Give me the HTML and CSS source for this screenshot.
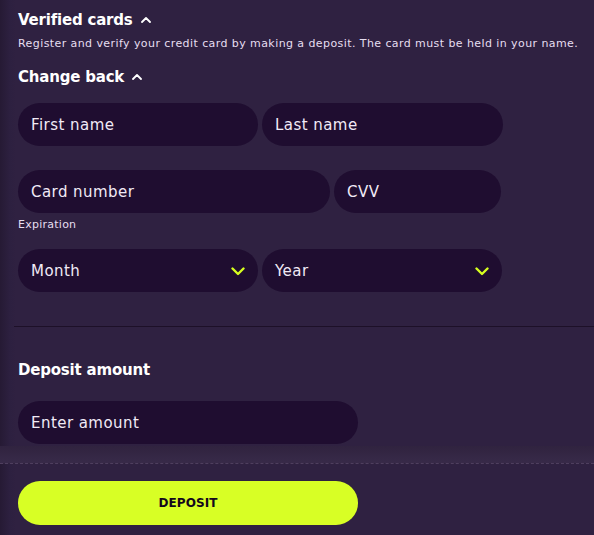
FILE: index.html
```html
<!DOCTYPE html>
<html>
<head>
<meta charset="utf-8">
<link rel="stylesheet" href="styles.css">
</head>
<body>
<div class="page">
  <main class="main">
    <section class="block">
      <h2 class="heading">Verified cards <svg class="caret" viewBox="0 0 10 6" width="10" height="6"><path d="M1 5 L5 1 L9 5" fill="none" stroke="#fff" stroke-width="1.8" stroke-linecap="round" stroke-linejoin="round"/></svg></h2>
      <p class="desc">Register and verify your credit card by making a deposit. The card must be held in your name.</p>
      <h2 class="heading heading-2">Change back <svg class="caret" viewBox="0 0 10 6" width="10" height="6"><path d="M1 5 L5 1 L9 5" fill="none" stroke="#fff" stroke-width="1.8" stroke-linecap="round" stroke-linejoin="round"/></svg></h2>
      <div class="row row-names">
        <div class="field w240">First name</div>
        <div class="field w241">Last name</div>
      </div>
      <div class="row row-card">
        <div class="field w312">Card number</div>
        <div class="field w167">CVV</div>
      </div>
      <div class="label">Expiration</div>
      <div class="row row-exp">
        <div class="field select w240">Month<svg class="chev" viewBox="0 0 14 9" width="14" height="9"><path d="M1.5 1.5 L7 7 L12.5 1.5" fill="none" stroke="#d6ff1f" stroke-width="2.4" stroke-linecap="round" stroke-linejoin="round"/></svg></div>
        <div class="field select w240">Year<svg class="chev" viewBox="0 0 14 9" width="14" height="9"><path d="M1.5 1.5 L7 7 L12.5 1.5" fill="none" stroke="#d6ff1f" stroke-width="2.4" stroke-linecap="round" stroke-linejoin="round"/></svg></div>
      </div>
    </section>
    <hr class="divider">
    <section class="block">
      <h2 class="heading heading-amount">Deposit amount</h2>
      <div class="field w340 amount">Enter amount</div>
    </section>
  </main>
  <footer class="footer">
    <div class="fade"></div>
    <div class="footer-inner">
      <button class="btn">DEPOSIT</button>
    </div>
  </footer>
</div>
</body>
</html>
```

FILE: styles.css
```css
* { box-sizing: border-box; }
html, body { margin: 0; padding: 0; }
body {
  width: 594px;
  height: 535px;
  overflow: hidden;
  background: #2f2141;
  font-family: "DejaVu Sans", "Noto Sans", sans-serif;
  color: #fff;
}
.page {
  height: 535px;
  display: flex;
  flex-direction: column;
  background: linear-gradient(to right, #261a34 0px, #2d2040 10px, #2f2141 16px);
}
.main {
  margin-left: 14px;
  flex: 1;
}
.block { padding: 0 4px; }
.heading {
  margin: 0;
  padding-top: 10px;
  font-size: 15px;
  line-height: 20px;
  font-weight: 700;
  letter-spacing: -0.2px;
  display: flex;
  align-items: center;
  gap: 8px;
  color: #fff;
}
.caret { margin-top: -1px; }
.heading-2 { padding-top: 16px; }
.desc {
  margin: 7px 0 0;
  font-size: 11px;
  line-height: 14px;
  color: #e6def0;
  letter-spacing: 0.42px;
  white-space: nowrap;
}
.row { display: flex; gap: 4px; }
.row-names { margin-top: 16px; }
.row-card { margin-top: 24px; }
.row-exp { margin-top: 17px; }
.field {
  height: 43px;
  border-radius: 22px;
  background: #1f0d30;
  color: #f1eaf6;
  font-size: 15px;
  letter-spacing: 0.45px;
  display: flex;
  align-items: center;
  padding-left: 13px;
  padding-right: 14px;
}
.select { justify-content: space-between; padding-right: 13px; }
.chev { margin-top: 1px; }
.w240 { width: 240px; }
.w241 { width: 241px; }
.w312 { width: 312px; }
.w167 { width: 167px; }
.w340 { width: 340px; }
.label {
  margin-top: 5px;
  font-size: 11px;
  line-height: 14px;
  color: #e6def0;
  letter-spacing: 0.25px;
}
.divider {
  margin: 34px 0 0;
  border: 0;
  height: 1px;
  background: #1d1028;
}
.heading-amount { padding-top: 33px; }
.amount { margin-top: 21px; }
.footer {
  flex: none;
  display: flex;
  flex-direction: column;
}
.fade {
  height: 18px;
  background: linear-gradient(to bottom, #30233f, #382a49);
  border-bottom: 1px dashed #4f3f5f;
}
.footer-inner {
  padding: 17px 0 10px 18px;
}
.btn {
  width: 340px;
  height: 44px;
  border: 0;
  border-radius: 22px;
  background: #d8ff25;
  color: #14081c;
  font-family: "DejaVu Sans", sans-serif;
  font-weight: 700;
  font-size: 12px;
  letter-spacing: 0.1px;
  display: block;
}
```
